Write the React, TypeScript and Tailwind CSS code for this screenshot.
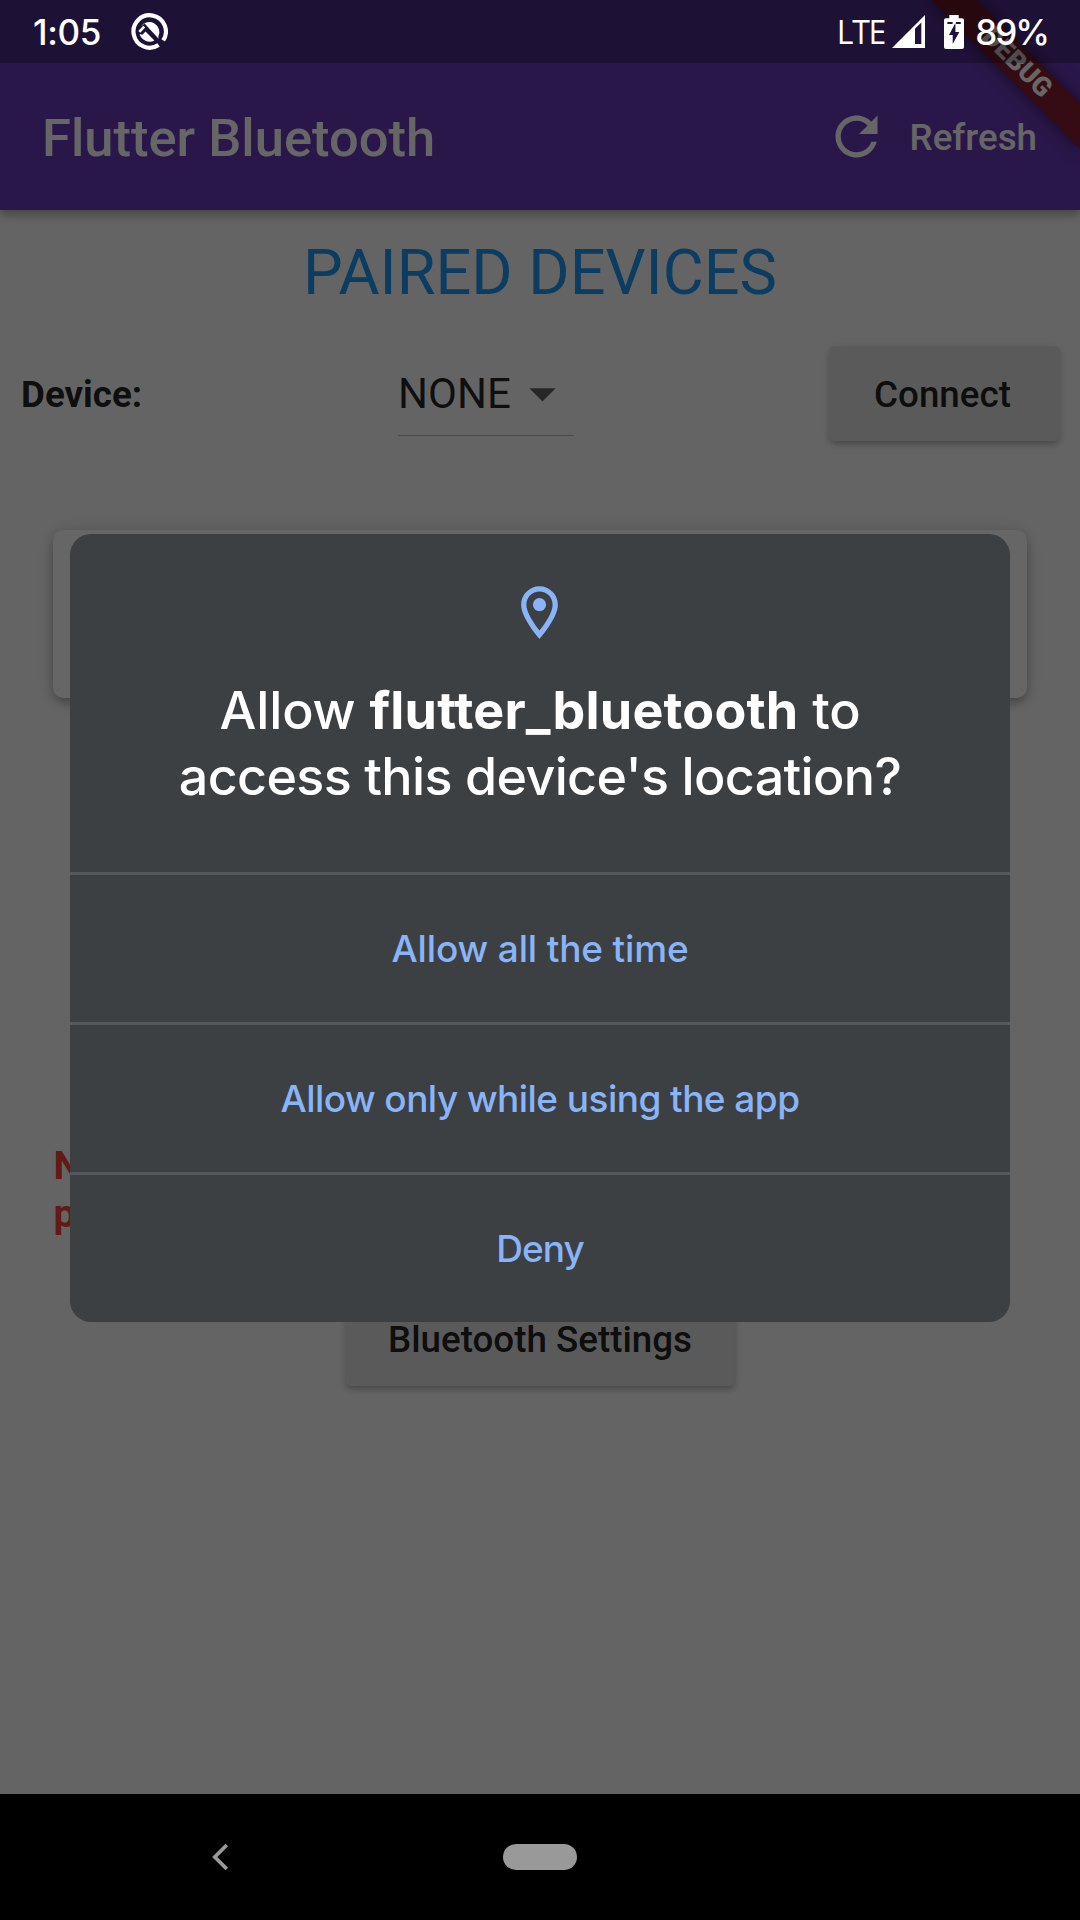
import React from "react";

function StatusBar() {
  return (
    <div className="absolute inset-x-0 top-0 flex h-[63px] items-center bg-black/25 pl-[33px] pr-[32px] text-white">
      <span className="pt-[2px] font-['Inter'] text-[35px] font-medium leading-[63px] tracking-[-0.3px]">1:05</span>
      <svg className="ml-[30px]" width="37" height="37" viewBox="0 0 37 37" fill="none">
        <path d="M32.2 27.4A16.2 16.2 0 1 0 27.6 32" stroke="#fff" strokeWidth="4.2" />
        <path d="M27.3 23.8A10.2 10.2 0 0 0 9.8 13.4L13.6 10.4 27.6 25.8Z" fill="#fff" />
        <path d="M8.6 21A10.2 10.2 0 0 0 23.4 27.4L14.5 18.6 11.4 21.8Z" fill="#fff" />
        <path d="M8.3 18.8L13.2 13.6" stroke="#fff" strokeWidth="2.6" />
      </svg>
      <div className="ml-auto flex h-[63px] items-center">
        <span className="font-['Open_Sans'] text-[32px] font-normal leading-[61px] tracking-[-1.2px]">LTE</span>
        <svg className="ml-[7px]" width="33" height="33" viewBox="0 0 33 33">
          <path d="M33 0V33H0Z" fill="#fff" />
          <path d="M23 13.7L29.3 7.4V29H23Z" fill="#1f1137" />
        </svg>
        <svg className="ml-[19px]" width="20" height="34" viewBox="0 0 20 34">
          <path d="M5.3 0H14.7V3.3H18Q20 3.3 20 5.3V32Q20 34 18 34H2Q0 34 0 32V5.3Q0 3.3 2 3.3H5.3Z" fill="#fff" />
          <path d="M3.4 7H8.6V9H3.4ZM12 7H16.8V9H12ZM11.4 8V17H15.3L8.7 29V20H5Z" fill="#1f1137" />
        </svg>
        <span className="ml-[11px] pt-[2px] font-['Inter'] text-[35px] font-medium leading-[63px] tracking-[-2px]">89%</span>
      </div>
    </div>
  );
}

function AppBar() {
  return (
    <header className="relative flex h-[210px] items-center bg-[#673ab7] pl-[42px] pr-[43px] pt-[63px] text-white shadow-[0_5px_10px_rgba(0,0,0,0.3)]">
      <h1 className="pt-[2px] text-[52.5px] font-medium leading-[62px]">Flutter Bluetooth</h1>
      <svg className="ml-auto mr-[22px]" width="63" height="63" viewBox="0 0 24 24" fill="#fff">
        <path d="M17.65 6.35C16.2 4.9 14.21 4 12 4c-4.42 0-7.99 3.58-7.99 8s3.57 8 7.99 8c3.73 0 6.84-2.55 7.73-6h-2.08c-.82 2.33-3.04 4-5.65 4-3.31 0-6-2.69-6-6s2.69-6 6-6c1.66 0 3.14.69 4.22 1.78L13 11h7V4l-2.35 2.35z" />
      </svg>
      <span className="pt-[2px] text-[36.75px] font-medium leading-[44px]">Refresh</span>
    </header>
  );
}

function Raised({ children, className }: { children: React.ReactNode; className: string }) {
  return (
    <button
      className={
        "flex h-[95px] items-center justify-center rounded-[5px] bg-[#e0e0e0] pt-[2px] text-[36.75px] font-medium leading-[44px] shadow-[0_5px_6px_-2px_rgba(0,0,0,0.14),0_3px_6px_rgba(0,0,0,0.1),0_2px_10px_rgba(0,0,0,0.08)] " +
        className
      }
    >
      {children}
    </button>
  );
}

function DebugBanner() {
  return (
    <div className="absolute left-[912px] top-[47.3px] flex h-[31.5px] w-[210px] rotate-45 items-center justify-center bg-[#861c33] shadow-[0_0_16px_rgba(0,0,0,0.5)]">
      <span className="text-[26.8px] font-black leading-[31px] text-white">DEBUG</span>
    </div>
  );
}

const choices = [
  { label: "Allow all the time", cls: "tracking-[-0.15px]" },
  { label: "Allow only while using the app", cls: "tracking-[-0.55px]" },
  { label: "Deny", cls: "tracking-[-1px]" },
];

function PermissionDialog() {
  return (
    <div className="absolute left-[70px] top-[534px] flex w-[940px] flex-col overflow-hidden rounded-[21px] bg-[#3c4043]">
      <div className="flex h-[338px] flex-col items-center pt-[47px] text-white">
        <svg className="mr-[2px]" width="63" height="63" viewBox="0 0 24 24" fill="#8ab4f8">
          <path d="M12 2C8.13 2 5 5.13 5 9c0 5.25 7 13 7 13s7-7.75 7-13c0-3.87-3.13-7-7-7zM7 9c0-2.76 2.24-5 5-5s5 2.24 5 5c0 2.88-2.88 7.19-5 9.88C9.92 16.21 7 11.85 7 9z" />
          <circle cx="12" cy="9" r="2.5" />
        </svg>
        <p className="mt-[34px] whitespace-nowrap text-center font-['Inter'] text-[52px] font-medium leading-[66px]">
          <span className="tracking-[-0.1px]">
            Allow <b className="font-bold tracking-[0.2px]">flutter_bluetooth</b> to
          </span>
          <br />
          <span className="tracking-[-0.65px]">access this device's location?</span>
        </p>
      </div>
      {choices.map((c) => (
        <button
          key={c.label}
          className="flex h-[150px] items-center justify-center border-t-[3px] border-[#55585b] font-['Inter'] text-[37px] font-medium leading-[48px] text-[#8ab4f8]"
        >
          <span className={c.cls}>{c.label}</span>
        </button>
      ))}
    </div>
  );
}

export default function App() {
  return (
    <div className="relative flex h-[1920px] w-[1080px] flex-col overflow-hidden bg-[#fafafa] font-['Roboto',sans-serif] text-black/87">
      <AppBar />
      <main className="flex flex-1 flex-col">
        <h2 className="mt-[26px] text-center text-[63px] leading-[74px] text-[#2196f3]">PAIRED DEVICES</h2>
        <div className="mt-[36px] flex h-[95px] items-center justify-between pl-[21px] pr-[20px]">
          <span className="pt-[2px] text-[36.75px] font-bold leading-[44px]">Device:</span>
          <div className="mb-[5px] ml-[1px] flex h-[90px] w-[176px] items-center border-b-[1.5px] border-[#bdbdbd] pt-[6px]">
            <span className="text-[42px] leading-[50px]">NONE</span>
            <svg width="63" height="63" viewBox="0 0 24 24" fill="#616161">
              <path d="M7 10l5 5 5-5z" />
            </svg>
          </div>
          <Raised className="w-[231px] pr-[4px]">Connect</Raised>
        </div>
        <div className="ml-[52.5px] mr-[53px] mt-[89px] h-[168px] rounded-[10.5px] bg-white shadow-[0_6px_8px_-2px_rgba(0,0,0,0.2),0_3px_14px_rgba(0,0,0,0.15),0_2px_22px_rgba(0,0,0,0.08)]" />
        <p className="mx-[53.5px] mt-[444px] text-[39.4px] font-bold leading-[48px] text-[#f44336]">
          NOTE: If you cannot find the device in the list, please pair the device by going to the bluetooth settings
        </p>
        <Raised className="mt-[53px] w-[389px] self-center">Bluetooth Settings</Raised>
      </main>
      <DebugBanner />
      <div className="absolute inset-0 bg-black/60" />
      <nav className="relative flex h-[126px] items-center bg-black">
        <svg className="ml-[211px]" width="18" height="28" viewBox="0 0 18 28" fill="none" stroke="#999" strokeWidth="3.8">
          <path d="M15.8 2L3.8 14 15.8 26" />
        </svg>
        <div className="ml-[274px] h-[26px] w-[74px] rounded-full bg-[#999]" />
      </nav>
      <PermissionDialog />
      <StatusBar />
    </div>
  );
}
